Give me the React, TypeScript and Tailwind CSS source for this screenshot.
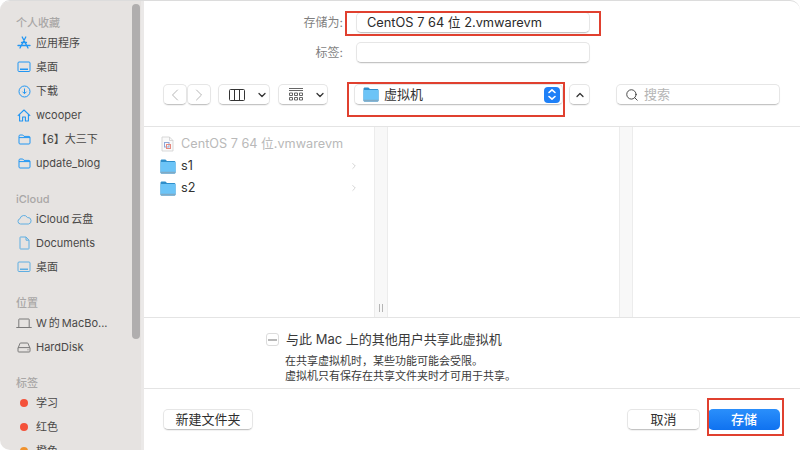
import React from 'react';
import { ChevronDown, ChevronLeft, ChevronRight, ChevronUp, Search } from 'lucide-react';

const fontStack = { fontFamily: 'Inter, "Noto Sans CJK SC", sans-serif' };

const blue = '#2196f3';
const soft = '#5eaee2';

const AppsIcon = () => (
	<svg width="14" height="14" viewBox="0 0 14 14" fill="none" stroke={blue} strokeWidth="1.3" strokeLinecap="round">
		<path d="M8.8 1 3 12M5.2 1 11 12M1 9.5h12M4.5 6.5h5" />
	</svg>
);

const DesktopIcon = ({ color = blue }: { color?: string }) => (
	<svg width="14" height="12" viewBox="0 0 14 12" fill="none" stroke={color} strokeWidth="1">
		<rect x="1" y="1" width="12" height="9.5" rx="1" />
		<path d="M3 8.2h8" strokeWidth="1.4" />
	</svg>
);

const DownloadIcon = () => (
	<svg width="13" height="13" viewBox="0 0 13 13" fill="none" stroke={blue} strokeWidth="1">
		<circle cx="6.5" cy="6.5" r="5.5" />
		<path d="M6.5 3.5v5M4.5 6.7l2 2 2-2" />
	</svg>
);

const HomeIcon = () => (
	<svg width="14" height="13" viewBox="0 0 14 13" fill="none" stroke={blue} strokeWidth="1.1" strokeLinejoin="round">
		<path d="M.8 6.8 7 1l6.2 5.8M2.6 5.4V12h3V8h2.8v4h3V5.4" />
	</svg>
);

const FolderIcon = () => (
	<svg width="13" height="11" viewBox="0 0 13 11" fill="none" stroke={blue} strokeWidth="1">
		<path d="M1 2.2c0-.7.4-1.2 1-1.2h2.8l1.2 1.4h5c.6 0 1 .4 1 1V9c0 .6-.4 1-1 1H2c-.6 0-1-.4-1-1zM1 3.6h11" />
	</svg>
);

const CloudIcon = () => (
	<svg width="15" height="11" viewBox="0 0 15 11" fill="none" stroke={soft} strokeWidth="1">
		<path d="M4 10H3.5A2.7 2.7 0 0 1 3 4.7 4 4 0 0 1 10.4 3.5 3.3 3.3 0 0 1 11.5 10z" />
	</svg>
);

const DocIcon = () => (
	<svg width="11" height="14" viewBox="0 0 11 14" fill="none" stroke={soft} strokeWidth="1">
		<path d="M1 1.5c0-.3.2-.5.5-.5H7l3 3.2v8.3c0 .3-.2.5-.5.5h-8a.5.5 0 0 1-.5-.5zM7 1v3.2h3" />
	</svg>
);

const LaptopIcon = () => (
	<svg width="16" height="11" viewBox="0 0 16 11" fill="none" stroke="#6e6e6e" strokeWidth="0.9">
		<path d="M2.8 9V1.5c0-.3.2-.5.5-.5h9.4c.3 0 .5.2.5.5V9M.3 9.5h15.4" />
	</svg>
);

const DiskIcon = () => (
	<svg width="14" height="11" viewBox="0 0 14 11" fill="none" stroke="#6e6e6e" strokeWidth="0.9">
		<path d="M1 6.2 3 1.4c.1-.3.3-.4.6-.4h6.8c.3 0 .5.1.6.4L13 6.2M1.8 5.6h10.4c.5 0 .8.4.8.8v2.8c0 .4-.3.8-.8.8H1.8c-.5 0-.8-.4-.8-.8V6.4c0-.4.3-.8.8-.8zM10.5 7.8h1" />
	</svg>
);

const TagDot = ({ color }: { color: string }) => (
	<span className="block h-2 w-2 rounded-full" style={{ backgroundColor: color }} />
);

const BigFolder = () => (
	<svg width="16" height="15" viewBox="0 0 16 15">
		<path d="M.5 2C.5 1 1 .5 2 .5h3.4L7 2h7c1 0 1.5.5 1.5 1.5V13c0 1-.5 1.500-1.500 1.500H2C1 14.500.5 14 .5 13z" fill="#2f8fcb" />
		<path d="M.5 4c0-.6.4-1 1-1h13c.6 0 1 .4 1 1v9c0 1-.5 1.500-1.500 1.500H2c-1 0-1.500-.5-1.500-1.500z" fill="#6cc4f7" />
		<path d="M.5 12.800V13c0 1 .5 1.500 1.500 1.500h12c1 0 1.500-.5 1.500-1.500v-.2z" fill="#8d9aa3" opacity="0.6" />
	</svg>
);

const DocThumb = () => (
	<svg width="13" height="16" viewBox="0 0 13 16" fill="none">
		<path d="M1 1h7.500L12 4.500V15H1z" fill="#fafafa" stroke="#cfcfcf" strokeWidth="0.8" />
		<path d="M8.500 1v3.500H12" stroke="#cfcfcf" strokeWidth="0.8" />
		<rect x="3.500" y="6.500" width="4.500" height="4.500" stroke="#8fa7d8" strokeWidth="1" />
		<rect x="5.500" y="8.500" width="4" height="4" stroke="#e58a80" strokeWidth="1" />
	</svg>
);

const sidebar = [
	{
		title: '个人收藏',
		items: [
			{ icon: <AppsIcon />, label: '应用程序' },
			{ icon: <DesktopIcon />, label: '桌面' },
			{ icon: <DownloadIcon />, label: '下载' },
			{ icon: <HomeIcon />, label: 'wcooper' },
			{ icon: <FolderIcon />, label: '【6】大三下' },
			{ icon: <FolderIcon />, label: 'update_blog' },
		],
	},
	{
		title: 'iCloud',
		items: [
			{ icon: <CloudIcon />, label: 'iCloud\u2009云盘' },
			{ icon: <DocIcon />, label: 'Documents' },
			{ icon: <DesktopIcon color={soft} />, label: '桌面' },
		],
	},
	{
		title: '位置',
		items: [
			{ icon: <LaptopIcon />, label: 'W\u2009的\u2009MacBo...' },
			{ icon: <DiskIcon />, label: 'HardDisk' },
		],
	},
	{
		title: '标签',
		items: [
			{ icon: <TagDot color="#f4523a" />, label: '学习' },
			{ icon: <TagDot color="#f4523a" />, label: '红色' },
			{ icon: <TagDot color="#f0922e" />, label: '橙色' },
		],
	},
];

const Sidebar = () => (
	<aside className="relative h-full w-[144px] shrink-0 overflow-hidden border-r-[3px] border-[#ebe9e8] bg-[#e6e3e1] pt-[14px]">
		{sidebar.map((section) => (
			<div key={section.title} className="mb-4">
				<div className="flex h-4 items-center pl-4 text-[11px] font-medium text-[#a9a7a6]">{section.title}</div>
				{section.items.map((item, index) => (
					<div key={index} className="flex h-6 items-center text-[11px] text-[#4a4948]">
						<span className="flex w-9 shrink-0 justify-center pl-[12px]">{item.icon}</span>
						<span className="whitespace-nowrap">{item.label}</span>
					</div>
				))}
			</div>
		))}
		{/* overlay scrollbar */}
		<div className="absolute left-[132px] top-[3px] h-[335px] w-2 rounded-full bg-[#b0aeae]" />
	</aside>
);

const ctrl = 'flex items-center rounded-[5px] border border-[#e6e6e6] border-b-[#c4c4c4] bg-white shadow-[0_1px_1px_rgba(0,0,0,0.06)]';

const FormRow = ({ label, children }: { label: string; children?: React.ReactNode }) => (
	<div className="flex items-center">
		<label className="w-[199px] shrink-0 text-right text-[12px] text-[#7f7f7f]">{label}</label>
		<div className={`${ctrl} ml-[13px] h-[21px] w-[234px] pl-[10px] text-[12.8px] text-[#2a2a2a]`}>{children}</div>
	</div>
);

const Toolbar = () => (
	<div className="mt-[21px] flex h-[21px] items-center pl-[19px]">
		<div className="flex">
			<div className={`${ctrl} h-[21px] w-6 justify-center`}>
				<ChevronLeft size={20} strokeWidth={1} color="#a8a8a8" />
			</div>
			<div className={`${ctrl} h-[21px] w-6 justify-center`}>
				<ChevronRight size={20} strokeWidth={1} color="#a8a8a8" />
			</div>
		</div>
		<div className={`${ctrl} ml-[7px] h-[21px] w-[52px] pl-[10px]`}>
			<svg width="16" height="12" viewBox="0 0 16 12" fill="none" stroke="#333" strokeWidth="1">
				<rect x="0.500" y="0.500" width="15" height="11" rx="1" />
				<path d="M5.500.5v11M10.500.5v11" />
			</svg>
			<ChevronDown size={12} strokeWidth={2.5} color="#333" className="ml-[11px]" />
		</div>
		<div className={`${ctrl} ml-2 h-[21px] w-[50px] pl-[10px]`}>
			<svg width="14" height="13" viewBox="0 0 14 13" fill="none" stroke="#555" strokeWidth="0.9">
				<path d="M0 .5h14M0 2.500h14" />
				<path d="M.5 5h3v2.500h-3zM5.500 5h3v2.500h-3zM10.500 5h3v2.500h-3zM.5 9.500h3V12h-3zM5.500 9.500h3V12h-3zM10.500 9.500h3V12h-3z" />
			</svg>
			<ChevronDown size={12} strokeWidth={2.5} color="#333" className="ml-[11px]" />
		</div>
		<div className={`${ctrl} ml-[26px] h-[21px] w-[209px] pl-2 pr-[2px] text-[13px] text-[#333]`}>
			<BigFolder />
			<span className="ml-[5px]">虚拟机</span>
			<span className="ml-auto flex h-4 w-4 items-center justify-center rounded-[4px] bg-[#1e80f7]">
				<svg width="10" height="13" viewBox="0 0 10 13" fill="none" stroke="#fff" strokeWidth="1.6" strokeLinecap="round" strokeLinejoin="round">
					<path d="M2 4.500 5 1.800l3 2.700M2 8.500l3 2.700 3-2.700" />
				</svg>
			</span>
		</div>
		<div className={`${ctrl} ml-[6px] h-[21px] w-[21px] justify-center`}>
			<ChevronUp size={12} strokeWidth={2.5} color="#333" />
		</div>
		<div className={`${ctrl} ml-[26px] h-[21px] w-[164px] pl-2 text-[13px] text-[#b5b5b5]`}>
			<Search size={14} strokeWidth={1.5} color="#333" />
			<span className="ml-[5px]">搜索</span>
		</div>
	</div>
);

const Browser = () => (
	<div className="flex h-[192px] border-y border-[#e4e4e4]">
		<div className="w-[230px] shrink-0 pl-[16px] pr-[15px] pt-[6px] text-[12.7px]">
			<div className="flex h-[22px] items-center text-[#b9b9b9]">
				<span className="flex w-[21px] pl-[1px]">
					<DocThumb />
				</span>
				<span className="whitespace-nowrap">CentOS 7 64 位.vmwarevm</span>
			</div>
			{['s1', 's2'].map((name) => (
				<div key={name} className="flex h-[22px] items-center text-[#333]">
					<BigFolder />
					<span className="ml-[5px]">{name}</span>
					<ChevronRight size={10} strokeWidth={1.2} color="#aaa" className="ml-auto" />
				</div>
			))}
		</div>
		<div className="flex w-[14px] shrink-0 items-end justify-center border-x border-[#ececec] bg-[#f8f8f8] pb-[4px]">
			<span className="mb-[1px] h-2 w-[4px] border-x border-[#b5b5b5]" />
		</div>
		<div className="w-[231px] shrink-0" />
		<div className="flex w-[14px] shrink-0 border-x border-[#ececec] bg-[#f8f8f8]" />
		<div className="flex-1" />
	</div>
);

const ShareOptions = () => (
	<div className="flex h-[71px] flex-col border-b border-[#e4e4e4] pl-[122px] pt-[12px]">
		<div className="flex items-center text-[13px] text-[#3a3a3a]">
			<span className="flex h-[13px] w-[13px] items-center justify-center rounded-[3px] border border-[#dcdcdc] bg-white">
				<span className="block h-[2px] w-[9px] bg-[#b8b8b8]" />
			</span>
			<span className="ml-[7px]">与此 Mac 上的其他用户共享此虚拟机</span>
		</div>
		<div className="ml-[19px] mt-[4px] text-[11px] leading-[15px] text-[#3a3a3a]">
			<p>在共享虚拟机时，某些功能可能会受限。</p>
			<p>虚拟机只有保存在共享文件夹时才可用于共享。</p>
		</div>
	</div>
);

const Footer = () => (
	<div className="flex items-start pl-[19px] pr-[20px] pt-[20px] text-[13px]">
		<button className={`${ctrl} h-[21px] w-[90px] justify-center text-[#2f2f2f]`}>新建文件夹</button>
		<button className={`${ctrl} ml-auto h-[21px] w-[73px] justify-center text-[#2f2f2f]`}>取消</button>
		<button className="ml-[8px] flex h-[21px] w-[72px] items-center justify-center rounded-[5px] bg-gradient-to-b from-[#2a8ffb] to-[#0f72f0] font-medium text-white">
			存储
		</button>
	</div>
);

const App = () => {
	return (
		<div className="relative h-[450px] w-[800px] overflow-hidden bg-white" style={fontStack}>
			<div className="flex h-full overflow-hidden rounded-[10px] border-t border-[#dcdcdc]">
				<Sidebar />
				<main className="min-w-0 flex-1">
					<div className="h-[125px] pt-[11px]">
						<FormRow label="存储为:">CentOS 7 64 位 2.vmwarevm</FormRow>
						<div className="mt-[9px]">
							<FormRow label="标签:" />
						</div>
						<Toolbar />
					</div>
					<Browser />
					<ShareOptions />
					<Footer />
				</main>
			</div>
			{/* red annotation boxes drawn over the dialog */}
			<div className="absolute left-[345px] top-[11px] h-[25px] w-[256px] border-2 border-[#e0402f]" />
			<div className="absolute left-[347px] top-[82px] h-[35px] w-[218px] border-2 border-[#e0402f]" />
			<div className="absolute left-[707px] top-[398px] h-[38px] w-[77px] border-2 border-[#e0402f]" />
		</div>
	);
};

export default App;
